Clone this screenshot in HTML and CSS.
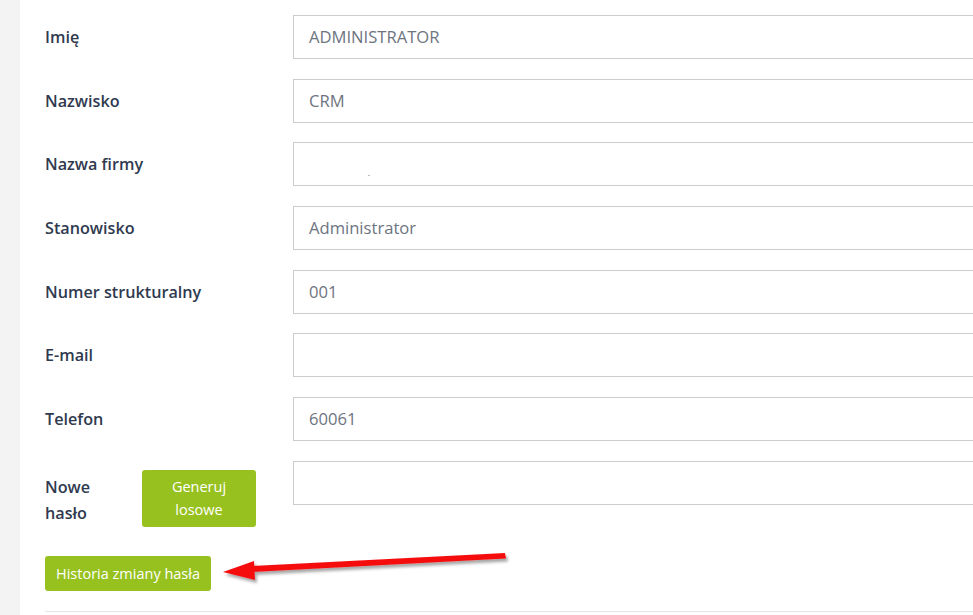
FILE: index.html
```html
<!DOCTYPE html>
<html lang="pl">
<head>
<meta charset="utf-8">
<link rel="stylesheet" href="styles.css">
</head>
<body>
<div class="page">
  <aside class="side"></aside>
  <main class="content">
    <form class="form">
      <div class="row"><label class="label">Imię</label><div class="field">ADMINISTRATOR</div></div>
      <div class="row"><label class="label">Nazwisko</label><div class="field">CRM</div></div>
      <div class="row"><label class="label">Nazwa firmy</label><div class="field"><span class="dot"></span></div></div>
      <div class="row"><label class="label">Stanowisko</label><div class="field">Administrator</div></div>
      <div class="row"><label class="label">Numer strukturalny</label><div class="field">001</div></div>
      <div class="row"><label class="label">E-mail</label><div class="field"></div></div>
      <div class="row"><label class="label">Telefon</label><div class="field">60061</div></div>
      <div class="row row-pass">
        <div class="pass-left">
          <label class="label label-wrap">Nowe hasło</label>
          <button type="button" class="btn btn-gen">Generuj losowe</button>
        </div>
        <div class="field"></div>
      </div>
      <div class="history">
        <button type="button" class="btn btn-hist">Historia zmiany hasła</button>
        <svg class="arrow" width="300" height="40" viewBox="0 0 300 40">
          <defs>
            <filter id="sh" x="-10%" y="-50%" width="120%" height="200%">
              <feDropShadow dx="2" dy="3" stdDeviation="1.5" flood-color="#000" flood-opacity="0.35"/>
            </filter>
          </defs>
          <g filter="url(#sh)">
            <polygon points="282,6 283,11.5 29,25 29,19" fill="#f50d0d"/>
            <polygon points="0,25 31,14 32,33" fill="#f50d0d"/>
          </g>
        </svg>
      </div>
      <div class="rule"></div>
    </form>
  </main>
</div>
</body>
</html>
```
FILE: styles.css
```css
html, body {
  margin: 0;
  padding: 0;
  background: #ffffff;
}
body {
  font-family: "Open Sans", "Noto Sans", sans-serif;
  overflow: hidden;
}
.page {
  display: flex;
  height: 615px;
}
.side {
  width: 20px;
  flex: none;
  background: #f3f3f3;
}
.content {
  flex: 1;
  padding: 15px 0 0 25px;
  overflow: hidden;
}
.form {
  display: flex;
  flex-direction: column;
}
.row {
  display: flex;
  align-items: center;
  height: 44px;
  margin-bottom: 19.7px;
}
.label {
  width: 248px;
  flex: none;
  font-size: 16.2px;
  font-weight: 600;
  color: #2f3a4f;
  line-height: 26px;
}
.field {
  flex: 1;
  height: 44px;
  box-sizing: border-box;
  border: 1px solid #cccccc;
  border-right: none;
  padding-left: 15px;
  font-size: 16.6px;
  color: #6d7480;
  line-height: 42px;
  margin-right: -10px;
  position: relative;
}
.dot {
  position: absolute;
  left: 74px;
  top: 32px;
  width: 2px;
  height: 1px;
  background: #bbbbbb;
}
.row-pass {
  align-items: flex-start;
  height: auto;
  margin-bottom: 29px;
}
.pass-left {
  width: 248px;
  flex: none;
  display: flex;
  align-items: flex-start;
  padding-top: 9px;
}
.label-wrap {
  width: 70px;
  margin-right: 27px;
  padding-top: 4px;
}
.btn {
  border: none;
  background: #97c11f;
  color: #ffffff;
  font-family: "Open Sans", "Noto Sans", sans-serif;
  font-size: 14.5px;
  border-radius: 3px;
  cursor: pointer;
}
.btn-gen {
  width: 114px;
  height: 57px;
  line-height: 23px;
  padding: 0 20px;
}
.history {
  display: flex;
  align-items: flex-start;
  height: 55px;
}
.btn-hist {
  height: 35px;
  padding: 0 11px;
  flex: none;
}
.arrow {
  margin-left: 12px;
  margin-top: -9px;
  flex: none;
}
.rule {
  height: 1px;
  background: #e5e5e5;
  margin-right: -10px;
}
```
